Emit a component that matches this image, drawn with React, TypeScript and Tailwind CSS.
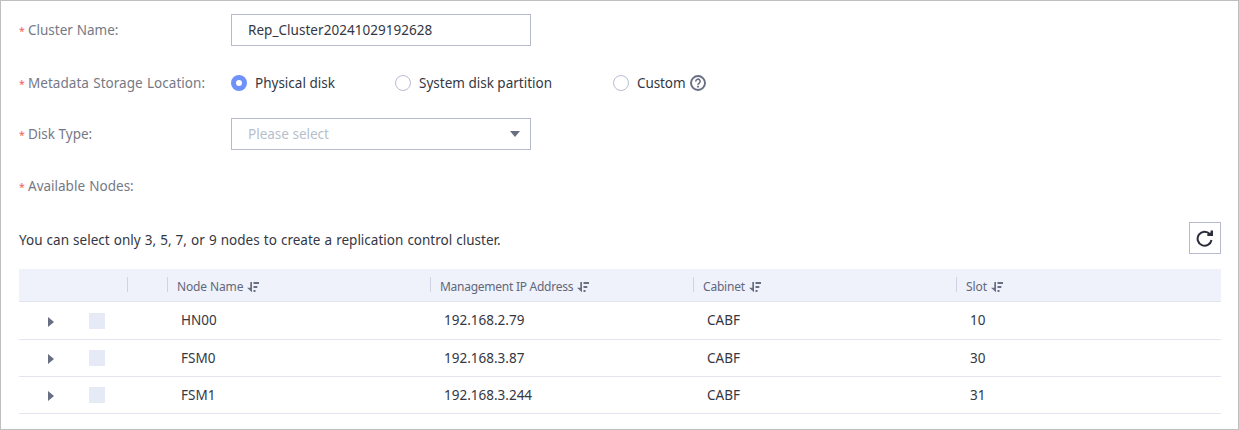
import { useState } from "react";

function SortIcon() {
  return (
    <svg width="12" height="11" viewBox="0 0 12 11" className="mt-[6px] shrink-0 text-[#696f82]" fill="currentColor">
      <path d="M3.300 0H5v10.300L0 5.700h3.300zM6.500 0h5.500v2H6.500zM6.500 4h3.800v2H6.500zM6.500 8h2v2h-2z" />
    </svg>
  );
}

function Label({ text, className }: { text: string; className: string }) {
  return (
    <div className="flex w-[212px] shrink-0 items-center text-[#757986]">
      <span className="w-[9px] pt-px text-[10.5px] text-[#f25a5a]">*</span>
      <span className={className}>{text}</span>
    </div>
  );
}

function Radio({ text, checked, onPick }: { text: string; checked: boolean; onPick: () => void }) {
  return (
    <button onClick={onPick} className="flex items-center gap-2">
      <span className={checked ? "size-4 rounded-full border-[5px] border-[#6f92fa] bg-white" : "size-4 rounded-full border border-[#b9bdd0] bg-white"} />
      <span>{text}</span>
    </button>
  );
}

const columns = [
  { title: "Node Name", style: "tracking-[-0.13px]" },
  { title: "Management IP Address", style: "tracking-[-0.26px]" },
  { title: "Cabinet", style: "tracking-[-0.2px]" },
  { title: "Slot", style: "tracking-[-0.1px]" },
];

const rows = [
  ["HN00", "192.168.2.79", "CABF", "10"],
  ["FSM0", "192.168.3.87", "CABF", "30"],
  ["FSM1", "192.168.3.244", "CABF", "31"],
];

const grid = "grid grid-cols-[109px_40px_263px_263px_263px_1fr]";

export default function App() {
  const [location, setLocation] = useState(0);
  return (
    <main className="h-[430px] w-[1239px] border border-[#bfbfbf] bg-white pt-3 pr-[17px] pl-[18px] font-['Noto_Sans','Liberation_Sans',sans-serif] text-[13.5px] leading-5 whitespace-nowrap text-[#343743]">
      <div className="mt-px flex h-8 items-center">
        <Label text="Cluster Name:" className="[word-spacing:0.3px]" />
        <div className="flex h-8 w-[300px] items-center border border-[#b6bacc] px-4">
          <span className="tracking-[0.04px]">Rep_Cluster20241029192628</span>
        </div>
      </div>
      <div className="mt-[27px] flex h-5 items-center">
        <Label text="Metadata Storage Location:" className="tracking-[0.04px] [word-spacing:0.7px]" />
        <div className="flex items-center">
          <div className="w-[164px]"><Radio text="Physical disk" checked={location === 0} onPick={() => setLocation(0)} /></div>
          <div className="w-[218px] [word-spacing:0.5px]"><Radio text="System disk partition" checked={location === 1} onPick={() => setLocation(1)} /></div>
          <div className="w-[77px] tracking-[-0.1px]"><Radio text="Custom" checked={location === 2} onPick={() => setLocation(2)} /></div>
          <svg width="16" height="16" viewBox="0 0 16 16" fill="none" stroke="#696f82">
            <circle cx="8" cy="8" r="7" strokeWidth="1.900" />
            <path d="M5.800 6.600a2.200 2.200 0 1 1 3.400 1.600C8.400 8.700 8 9 8 9.800" strokeWidth="1.600" />
            <path d="M8 10.800v1.700" strokeWidth="1.800" />
          </svg>
        </div>
      </div>
      <div className="mt-[25px] flex h-8 items-center">
        <Label text="Disk Type:" className="" />
        <div className="flex h-8 w-[300px] items-center justify-between border border-[#b6bacc] pr-[10px] pl-4 text-[#b6bfcc]">
          <span>Please select</span>
          <svg width="10" height="6" viewBox="0 0 10 6" fill="#696f82"><path d="M0 0h10L5 6z" /></svg>
        </div>
      </div>
      <div className="mt-[26px] flex h-5 items-center">
        <Label text="Available Nodes:" className="[word-spacing:0.8px]" />
      </div>
      <div className="mt-[26px] flex h-8 items-center justify-between">
        <span className="mt-1 [word-spacing:0.6px]">You can select only 3, 5, 7, or 9 nodes to create a replication control cluster.</span>
        <button className="flex size-8 items-center justify-center border border-[#b6bacc]">
          <svg width="18" height="18" viewBox="0 0 18 18" fill="none">
            <path d="M15.500 11A7 7 0 1 1 13.800 5" stroke="#2c2f3b" strokeWidth="2" />
            <path d="M17 1.500V7H11.300V5L13.500 4.600L14.600 3.200V1.500z" fill="#2c2f3b" />
          </svg>
        </button>
      </div>
      <section className="mt-[15px]">
        <div className={`${grid} h-[33px] items-center border-b border-[#e0e4f0] bg-[#eff2fb] text-[12px] text-[#62677a]`}>
          <div className="mb-px h-[15px] border-r border-[#d0d4e2]" />
          <div className="mb-px h-[15px] border-r border-[#d0d4e2]" />
          {columns.map((c, i) => (
            <div key={c.title} className={`mb-px flex h-[15px] items-center gap-1 pl-[9px] ${i < 3 ? "border-r border-[#d0d4e2]" : ""}`}>
              <span className={`pt-[4px] ${c.style}`}>{c.title}</span>
              <SortIcon />
            </div>
          ))}
        </div>
        {rows.map((r, i) => (
          <div key={r[0]} className={`${grid} ${i === 0 ? "h-[38px]" : "h-[37px]"} items-center border-b border-[#e3e6f0]`}>
            <div className="flex items-center pl-[29px]">
              <svg width="6" height="10" viewBox="0 0 6 10" className="mt-[2px]" fill="#696f82"><path d="M0 0v10l6-5z" /></svg>
              <span className="ml-[35px] size-4 bg-[#e5eaf6]" />
            </div>
            <span />
            {r.map((v, j) => (
              <span key={j} className={`pl-[13px] ${i === 0 ? "pb-[2px]" : ""}`}>{v}</span>
            ))}
          </div>
        ))}
      </section>
    </main>
  );
}
